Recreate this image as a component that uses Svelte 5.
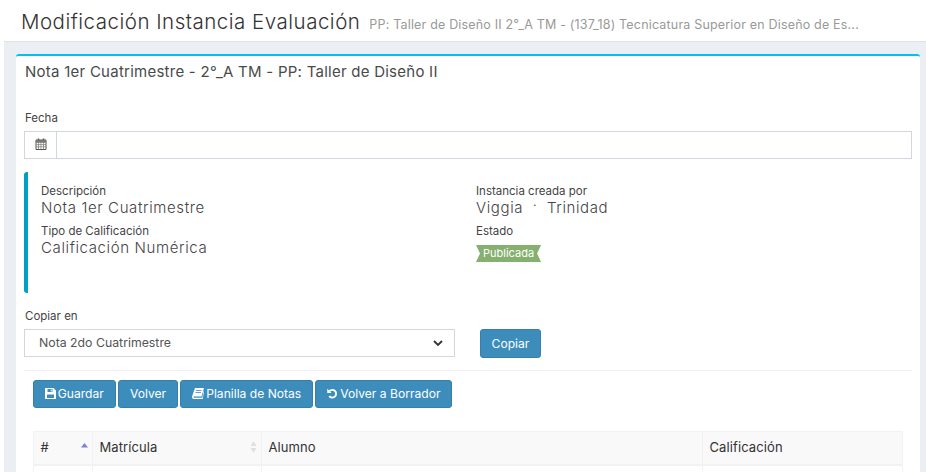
<script lang="ts">
  const buttons = [
    { label: 'Guardar', icon: 'save' },
    { label: 'Volver', icon: '' },
    { label: 'Planilla de Notas', icon: 'book' },
    { label: 'Volver a Borrador', icon: 'undo' }
  ];
</script>

<div class="page">
  <header class="top">
    <h1>Modificación Instancia Evaluación</h1>
    <small>PP: Taller de Diseño II 2°_A TM - (137_18) Tecnicatura Superior en Diseño de Es...</small>
  </header>

  <main class="content">
    <section class="box">
      <h2>Nota 1er Cuatrimestre - 2°_A TM - PP: Taller de Diseño II</h2>

      <div class="field">
        <span class="label">Fecha</span>
        <div class="input-group">
          <span class="addon">
            <svg width="12" height="12" viewBox="0 0 12 12" aria-hidden="true">
              <path d="M1 2h10v9.500H1z" fill="none" stroke="#555" stroke-width="1" />
              <path d="M1 4.500h10M3.500 4.500V11M6 4.500V11M8.500 4.500V11M1 6.600h10M1 8.800h10" stroke="#777" stroke-width="0.7" />
              <path d="M3.500 .5v2.500M8.500 .5v2.500" stroke="#555" stroke-width="1.400" />
              <path d="M1 2h10v2.300H1z" fill="#777" />
            </svg>
          </span>
          <div class="input"></div>
        </div>
      </div>

      <div class="callout">
        <div class="col">
          <span class="label">Descripción</span>
          <p>Nota 1er Cuatrimestre</p>
          <span class="label">Tipo de Calificación</span>
          <p>Calificación Numérica</p>
        </div>
        <div class="col">
          <span class="label">Instancia creada por</span>
          <p class="creator"><span>Viggia</span><span class="dot">·</span><span>Trinidad</span></p>
          <span class="label">Estado</span>
          <span class="ribbon">Publicada</span>
        </div>
      </div>

      <span class="label copy-label">Copiar en</span>
      <div class="copy-row">
        <div class="select">
          <span>Nota 2do Cuatrimestre</span>
          <svg width="10" height="6" viewBox="0 0 10 6" aria-hidden="true">
            <path d="M1 1l4 4 4-4" fill="none" stroke="#333" stroke-width="1.800" />
          </svg>
        </div>
        <button class="btn copy">Copiar</button>
      </div>

      <hr />

      <div class="actions">
        {#each buttons as b}
          <button class="btn">
            {#if b.icon === 'save'}
              <svg width="11" height="11" viewBox="0 0 11 11" aria-hidden="true">
                <path fill-rule="evenodd" d="M0 0h8.500L11 2.500V11H0zM2.500 1v3h5V1zM2 6.500V10h7V6.500zM5.800 1.500h1v2h-1z" fill="#fff" />
              </svg>
            {:else if b.icon === 'book'}
              <svg width="12" height="11" viewBox="0 0 12 11" aria-hidden="true">
                <path d="M3 0h9L9.500 8.500H2C1.400 8.500 1.200 9.700 2 9.700h8.300L11.400 3l.6.5L10.700 11H1.800C.3 11-.3 9.500.2 8z" fill="#fff" />
                <path d="M4 2.500h5.500M3.500 4.500H9" stroke="#3c8dbc" stroke-width="0.8" />
              </svg>
            {:else if b.icon === 'undo'}
              <svg width="11" height="11" viewBox="0 0 12 12" aria-hidden="true">
                <path d="M2.600 3.400A4.200 4.200 0 1 1 2.400 8.800" fill="none" stroke="#fff" stroke-width="2" />
                <path d="M.3.800v4.700h4.700z" fill="#fff" />
              </svg>
            {/if}
            <span>{b.label}</span>
          </button>
        {/each}
      </div>

      <table>
        <colgroup>
          <col class="c-num" />
          <col class="c-mat" />
          <col class="c-alu" />
          <col />
        </colgroup>
        <thead>
          <tr>
            <th>
              <span class="th-inner">#
                <svg width="7" height="10" viewBox="0 0 7 10" aria-hidden="true"><path d="M3.500 1L7 5.500H0z" fill="#7d7fd8" /></svg>
              </span>
            </th>
            <th>
              <span class="th-inner">Matrícula
                <svg width="7" height="12" viewBox="0 0 7 12" aria-hidden="true"><path d="M3.500 0L6.500 5H.5zM3.500 12L.5 7h6z" fill="#e0e0e0" /></svg>
              </span>
            </th>
            <th>Alumno</th>
            <th>Calificación</th>
          </tr>
        </thead>
        <tbody>
          <tr>
            <td></td>
            <td></td>
            <td></td>
            <td><div class="grade"></div></td>
          </tr>
        </tbody>
      </table>
    </section>
  </main>
</div>

<style>
  :global(body) {
    margin: 0;
    background: #fff;
  }

  .page {
    width: 926px;
    height: 472px;
    overflow: hidden;
    font-family: Inter, "Liberation Sans", sans-serif;
    color: #333;
  }

  .top {
    height: 41px;
    box-sizing: border-box;
    padding: 8px 0 0 21px;
    display: flex;
    align-items: baseline;
    gap: 9px;
    white-space: nowrap;
  }

  h1 {
    margin: 0;
    font-size: 20.500px;
    font-weight: 300;
    line-height: 28px;
    letter-spacing: 0.5px;
    color: #333;
  }

  small {
    font-size: 12.500px;
    font-weight: 400;
    letter-spacing: 0.18px;
    color: #999;
  }

  .content {
    margin-left: 4px;
    height: 431px;
    box-sizing: border-box;
    padding: 12px 6px 0 12px;
    background: #ebeef3;
    border-top: 1px solid #dfe2e6;
  }

  .box {
    height: 420px;
    box-sizing: border-box;
    padding: 0 8px 0 8px;
    background: #fff;
    border-top: 2px solid #00c0ef;
    border-radius: 3px 3px 0 0;
  }

  h2 {
    margin: 0;
    padding: 7px 0 0 1px;
    font-size: 15px;
    font-weight: 400;
    line-height: 18px;
    letter-spacing: 0.25px;
    color: #4a4a4a;
  }

  .label {
    display: block;
    font-size: 11.500px;
    font-weight: 400;
    line-height: 14px;
    color: #444;
  }

  .field {
    margin-top: 30px;
  }

  .field .label {
    padding: 0 0 6px 1px;
  }

  .input-group {
    display: flex;
    height: 28px;
    box-sizing: border-box;
    border: 1px solid #d2d6de;
  }

  .addon {
    width: 32px;
    flex: none;
    display: flex;
    align-items: center;
    justify-content: center;
    padding-bottom: 2px;
    box-sizing: border-box;
    border-right: 1px solid #d2d6de;
  }

  .callout {
    margin-top: 13px;
    height: 121px;
    box-sizing: border-box;
    display: flex;
    padding: 12px 0 0 13px;
    border-left: 4px solid #00a0c4;
    border-radius: 3px;
  }

  .col {
    width: 435px;
  }

  .col p {
    margin: 0 0 7px;
    padding-top: 1px;
    font-size: 15px;
    font-weight: 300;
    line-height: 18px;
    letter-spacing: 0.62px;
    color: #444;
  }

  .creator {
    display: flex;
    gap: 10px;
  }

  .dot {
    font-size: 11px;
    line-height: 12px;
    font-weight: 400;
  }

  .ribbon {
    display: inline-block;
    margin-top: 7px;
    padding: 0 7px;
    height: 17px;
    font-size: 11px;
    line-height: 17px;
    color: #fff;
    background: #85b06f;
    clip-path: polygon(0 0, 100% 0, calc(100% - 4px) 50%, 100% 100%, 0 100%, 4px 50%);
  }

  .copy-label {
    margin: 16px 0 6px 1px;
  }

  .copy-row {
    display: flex;
    gap: 25px;
  }

  .select {
    width: 431px;
    height: 28px;
    box-sizing: border-box;
    padding: 0 11px 2px 14px;
    display: flex;
    align-items: center;
    justify-content: space-between;
    border: 1px solid #d2d6de;
    font-size: 12.300px;
    color: #555;
  }

  .select svg {
    margin-top: 2px;
  }

  .btn {
    display: inline-flex;
    align-items: center;
    justify-content: center;
    gap: 2px;
    height: 28px;
    box-sizing: border-box;
    padding: 0 10.800px 1px;
    border: 1px solid #367fa9;
    border-radius: 3px;
    background: #3c8dbc;
    color: #fff;
    font-family: inherit;
    font-size: 12.100px;
    white-space: nowrap;
  }

  .copy {
    height: 29px;
    width: 61px;
    padding: 0;
  }

  hr {
    margin: 12px 0 9px;
    border: 0;
    border-top: 1px solid #f0f0f0;
  }

  .actions {
    display: flex;
    gap: 2.500px;
    padding-left: 9px;
  }

  table {
    width: 870px;
    margin: 23px 0 0 9px;
    table-layout: fixed;
    border-collapse: collapse;
    font-size: 13px;
    letter-spacing: 0.1px;
  }

  .c-num { width: 59px; }
  .c-mat { width: 169px; }
  .c-alu { width: 441px; }

  th {
    height: 33px;
    box-sizing: border-box;
    padding: 0 7px 2px 6.500px;
    background: #f9f9f9;
    border: 1px solid #f2f2f2;
    border-bottom-width: 2px;
    text-align: left;
    font-weight: 400;
    color: #333;
  }

  .th-inner {
    display: flex;
    align-items: center;
    justify-content: space-between;
  }

  .th-inner svg {
    margin-right: -3px;
  }

  td {
    height: 30px;
    padding: 6px 0 0 67px;
    vertical-align: top;
    border: 1px solid #f2f2f2;
  }

  .grade {
    width: 66px;
    height: 20px;
    background: #e4e4ee;
  }
</style>
